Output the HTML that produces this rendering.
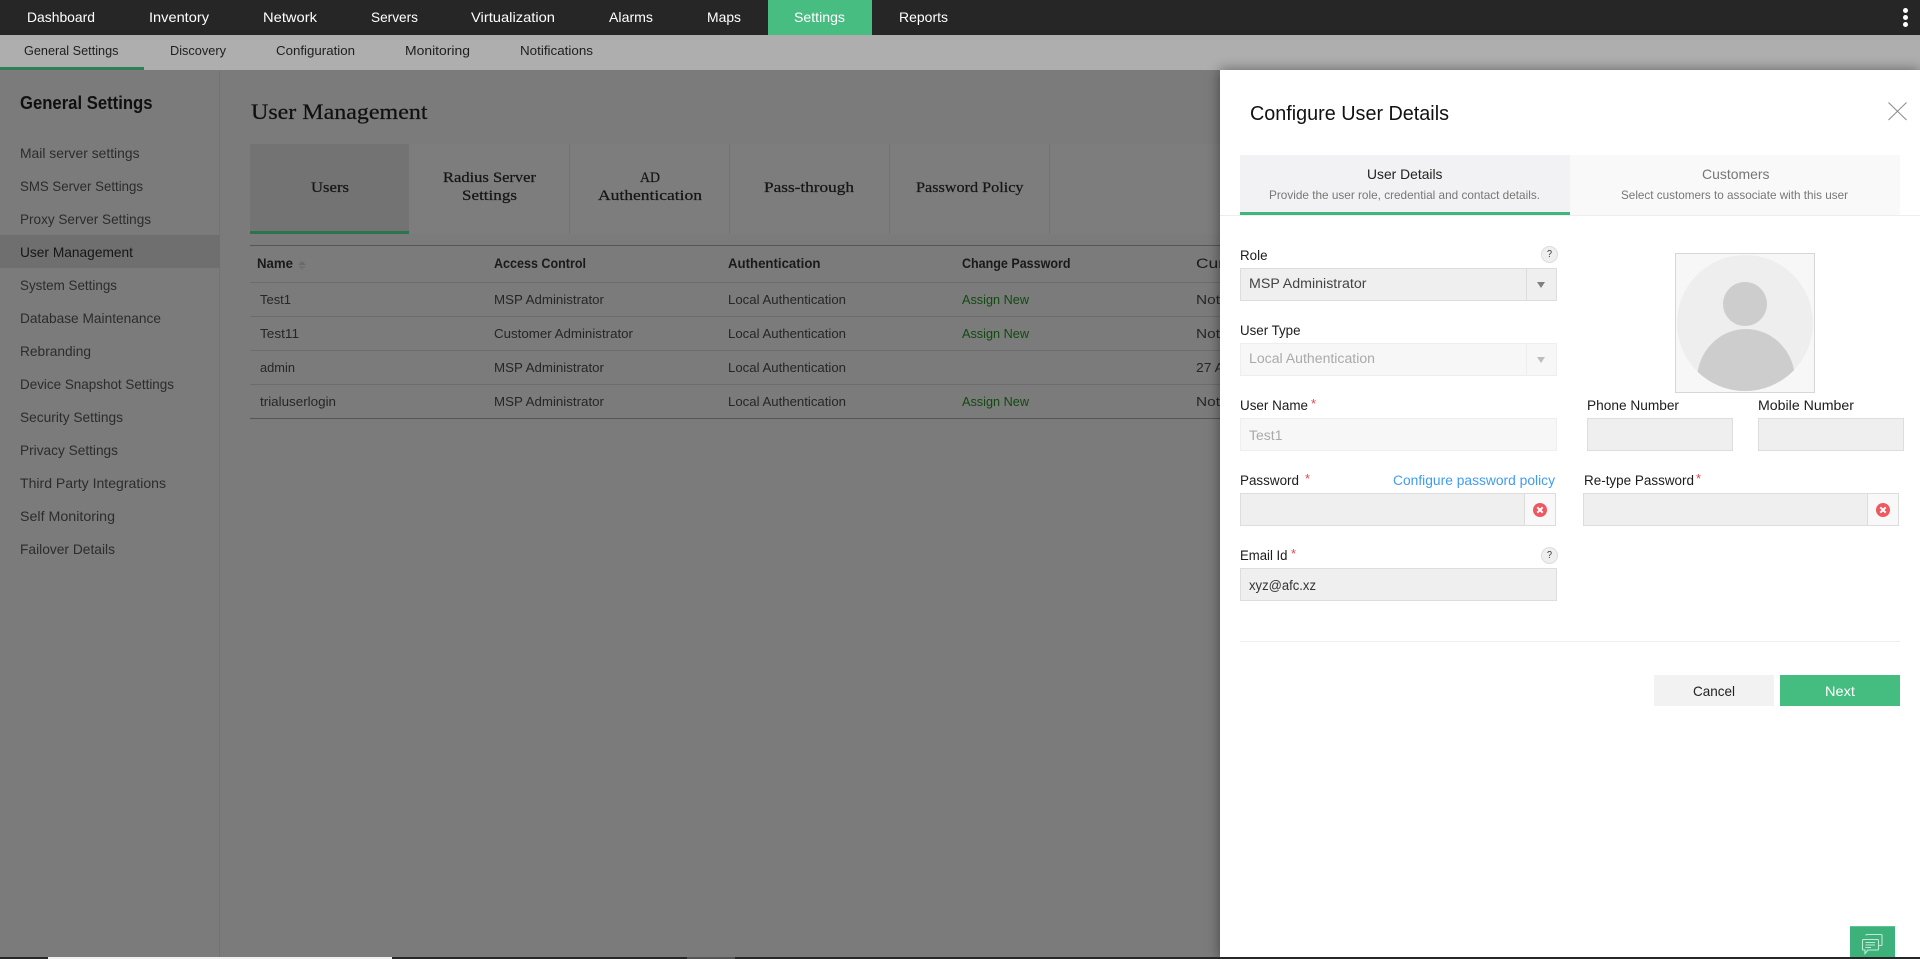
<!DOCTYPE html>
<html lang="en"><head><meta charset="utf-8"><title>Configure User Details</title>
<style>
html,body{margin:0;padding:0;width:1920px;height:959px;overflow:hidden;background:#7b7b7b}
body{position:relative;font-family:"Liberation Sans",sans-serif;font-size:14px;color:#333}
.a{position:absolute;box-sizing:border-box}
.t{position:absolute;white-space:nowrap;line-height:20px;height:20px;transform-origin:0 50%}
.s{font-family:"Liberation Serif",serif;color:#161616;-webkit-text-stroke:.25px #161616}
.tb{margin-top:1px}
.n{color:#fff;font-size:14px}
.u{color:#1e1e1e;font-size:13px;margin-top:1px;margin-left:-.5px}
.m{color:#2c2c2c;font-size:14px;margin-left:-.7px}
.h{color:#1a1a1a;font-size:14px;font-weight:bold;margin-left:-.7px}
.c{color:#262626;font-size:13px;margin-top:.7px}
.g{color:#104a10;font-size:13px;margin-top:.7px}
.l{color:#1c1c1c;font-size:13.5px;margin-top:1px;margin-left:-.5px}
.v{margin-top:1px}
.r{color:#f0404f;font-size:13px;margin-top:1px}
.i{background:#efefef;border:1px solid #ddd}
.d{background:#f7f7f7;border:1px solid #eee}
.tri{position:absolute;width:0;height:0;border-left:4.5px solid transparent;border-right:4.5px solid transparent}
</style></head><body>

<div class="a" style="left:0;top:0;width:1920px;height:35px;background:#262626"></div>
<div class="a" style="left:768px;top:0;width:104px;height:35px;background:#48bd82"></div>
<span class="t n" style="left:27px;top:7px;--w:68">Dashboard</span>
<span class="t n" style="left:149px;top:7px;--w:60">Inventory</span>
<span class="t n" style="left:262.5px;top:7px;--w:54">Network</span>
<span class="t n" style="left:371px;top:7px;--w:47">Servers</span>
<span class="t n" style="left:471px;top:7px;--w:84">Virtualization</span>
<span class="t n" style="left:609px;top:7px;--w:44">Alarms</span>
<span class="t n" style="left:707px;top:7px;--w:34">Maps</span>
<span class="t n" style="left:794px;top:7px;--w:51">Settings</span>
<span class="t n" style="left:898.5px;top:7px;--w:49">Reports</span>
<div class="a" style="left:1902.5px;top:8px;width:5px;height:5px;border-radius:50%;background:#fff"></div>
<div class="a" style="left:1902.5px;top:15px;width:5px;height:5px;border-radius:50%;background:#fff"></div>
<div class="a" style="left:1902.5px;top:22px;width:5px;height:5px;border-radius:50%;background:#fff"></div>

<div class="a" style="left:0;top:35px;width:1920px;height:35px;background:#aeaeae"></div>
<div class="a" style="left:0;top:67px;width:144px;height:3px;background:#2f7f58"></div>
<span class="t u" style="left:24.5px;top:40px;--w:94.5">General Settings</span>
<span class="t u" style="left:170px;top:40px;--w:56">Discovery</span>
<span class="t u" style="left:276px;top:40px;--w:79">Configuration</span>
<span class="t u" style="left:405px;top:40px;--w:65">Monitoring</span>
<span class="t u" style="left:520px;top:40px;--w:73">Notifications</span>

<div class="a" style="left:219px;top:70px;width:1px;height:887px;background:#737373"></div>
<span class="t" style="left:20px;top:93px;--w:132.5;font-size:18px;color:#101010;font-weight:bold">General Settings</span>
<div class="a" style="left:0;top:235px;width:220px;height:33px;background:#6f6f70"></div>
<span class="t m" style="left:20.5px;top:143px;--w:119.5">Mail server settings</span>
<span class="t m" style="left:20.5px;top:176px;--w:123">SMS Server Settings</span>
<span class="t m" style="left:20.5px;top:209px;--w:131">Proxy Server Settings</span>
<span class="t m" style="left:20.5px;top:242px;--w:113;color:#161616">User Management</span>
<span class="t m" style="left:20.5px;top:275px;--w:97">System Settings</span>
<span class="t m" style="left:20.5px;top:308px;--w:141">Database Maintenance</span>
<span class="t m" style="left:20.5px;top:341px;--w:71">Rebranding</span>
<span class="t m" style="left:20.5px;top:374px;--w:154">Device Snapshot Settings</span>
<span class="t m" style="left:20.5px;top:407px;--w:103">Security Settings</span>
<span class="t m" style="left:20.5px;top:440px;--w:98">Privacy Settings</span>
<span class="t m" style="left:20.5px;top:473px;--w:146">Third Party Integrations</span>
<span class="t m" style="left:20.5px;top:506px;--w:95">Self Monitoring</span>
<span class="t m" style="left:20.5px;top:539px;--w:95">Failover Details</span>

<span class="t s" style="left:250.5px;top:102px;--w:176.5;font-size:22px;color:#101010">User Management</span>

<div class="a" style="left:250px;top:144px;width:970px;height:90px;background:#7d7d7d"></div>
<div class="a" style="left:250px;top:144px;width:159px;height:90px;background:#737373"></div>
<div class="a" style="left:250px;top:231px;width:159px;height:3px;background:#2d7350"></div>
<div class="a" style="left:569px;top:144px;width:1px;height:90px;background:#727272"></div>
<div class="a" style="left:729px;top:144px;width:1px;height:90px;background:#727272"></div>
<div class="a" style="left:889px;top:144px;width:1px;height:90px;background:#727272"></div>
<div class="a" style="left:1049px;top:144px;width:1px;height:90px;background:#727272"></div>
<span class="t s tb" style="left:310.5px;top:177px;--w:38;font-size:15px">Users</span>
<span class="t s" style="left:443px;top:168px;--w:93;font-size:15px">Radius Server</span>
<span class="t s" style="left:462px;top:186px;--w:55;font-size:15px">Settings</span>
<span class="t s" style="left:640px;top:168px;--w:20;font-size:15px">AD</span>
<span class="t s" style="left:598px;top:186px;--w:104;font-size:15px">Authentication</span>
<span class="t s tb" style="left:764px;top:177px;--w:90;font-size:15px">Pass-through</span>
<span class="t s tb" style="left:915.5px;top:177px;--w:107.5;font-size:15px">Password Policy</span>

<div class="a" style="left:250px;top:245px;width:970px;height:1px;background:#555"></div>
<div class="a" style="left:250px;top:282px;width:970px;height:1px;background:#6c6c6c"></div>
<div class="a" style="left:250px;top:316px;width:970px;height:1px;background:#6c6c6c"></div>
<div class="a" style="left:250px;top:350px;width:970px;height:1px;background:#6c6c6c"></div>
<div class="a" style="left:250px;top:384px;width:970px;height:1px;background:#6c6c6c"></div>
<div class="a" style="left:250px;top:418px;width:970px;height:1px;background:#555"></div>

<span class="t h" style="left:257.5px;top:253px;--w:36">Name</span>
<div class="tri" style="left:297.5px;top:261px;border-bottom:4px solid #6a6a6a"></div>
<div class="tri" style="left:297.5px;top:266px;border-top:4px solid #717171"></div>
<span class="t h" style="left:494.5px;top:253px;--w:92">Access Control</span>
<span class="t h" style="left:728.5px;top:253px;--w:92.5">Authentication</span>
<span class="t h" style="left:962.5px;top:253px;--w:108.5">Change Password</span>
<span class="t h" style="left:1196.5px;top:253px;--w:28;font-weight:normal">Cur</span>

<span class="t c" style="left:260px;top:289px;--w:31">Test1</span>
<span class="t c" style="left:494px;top:289px;--w:110">MSP Administrator</span>
<span class="t c" style="left:728px;top:289px;--w:118">Local Authentication</span>
<span class="t g" style="left:962px;top:289px;--w:67">Assign New</span>
<span class="t c" style="left:1196px;top:289px;--w:24">Not</span>

<span class="t c" style="left:260px;top:323px;--w:39">Test11</span>
<span class="t c" style="left:494px;top:323px;--w:139">Customer Administrator</span>
<span class="t c" style="left:728px;top:323px;--w:118">Local Authentication</span>
<span class="t g" style="left:962px;top:323px;--w:67">Assign New</span>
<span class="t c" style="left:1196px;top:323px;--w:24">Not</span>

<span class="t c" style="left:260px;top:357px;--w:35">admin</span>
<span class="t c" style="left:494px;top:357px;--w:110">MSP Administrator</span>
<span class="t c" style="left:728px;top:357px;--w:118">Local Authentication</span>
<span class="t c" style="left:1196px;top:357px;--w:28">27 A</span>

<span class="t c" style="left:260px;top:391px;--w:76">trialuserlogin</span>
<span class="t c" style="left:494px;top:391px;--w:110">MSP Administrator</span>
<span class="t c" style="left:728px;top:391px;--w:118">Local Authentication</span>
<span class="t g" style="left:962px;top:391px;--w:67">Assign New</span>
<span class="t c" style="left:1196px;top:391px;--w:24">Not</span>

<!-- Panel -->
<div class="a" style="left:1220px;top:70px;width:700px;height:889px;background:#fff;box-shadow:0 0 12px rgba(0,0,0,.45)"></div>
<span class="t" style="left:1250px;top:104px;--w:199;font-size:20px;color:#111">Configure User Details</span>
<svg class="a" style="left:1886px;top:100px" width="24" height="23" viewBox="0 0 24 23"><path d="M2.5 2.5L20.5 20M20.5 2.5L2.5 20" stroke="#888" stroke-width="1" fill="none"/></svg>

<div class="a" style="left:1220px;top:215px;width:700px;height:1px;background:#eee"></div>
<div class="a" style="left:1240px;top:155px;width:330px;height:60px;background:#f2f2f4"></div>
<div class="a" style="left:1570px;top:155px;width:330px;height:60px;background:#f9f9fa"></div>
<div class="a" style="left:1240px;top:212px;width:330px;height:3px;background:#3fb67b"></div>
<span class="t" style="left:1367px;top:164px;--w:75.5;font-size:14px;color:#222">User Details</span>
<span class="t" style="left:1269px;top:185px;--w:271;font-size:12px;color:#777">Provide the user role, credential and contact details.</span>
<span class="t" style="left:1701.5px;top:164px;--w:67.5;font-size:14px;color:#777">Customers</span>
<span class="t" style="left:1621px;top:185px;--w:227;font-size:12px;color:#777">Select customers to associate with this user</span>

<span class="t l" style="left:1240.5px;top:245px;--w:27.5">Role</span>
<div class="a" style="left:1541px;top:246px;width:17px;height:17px;border-radius:50%;background:#efefef;border:1px solid #ddd"></div>
<span class="t" style="left:1546.5px;top:244.5px;--w:5;font-size:10px;color:#333">?</span>
<div class="a i" style="left:1240px;top:268px;width:317px;height:33px"></div>
<div class="a" style="left:1526px;top:268px;width:1px;height:33px;background:#ddd"></div>
<div class="tri" style="left:1536.5px;top:282px;border-top:6px solid #808080"></div>
<span class="t v" style="left:1249px;top:273px;--w:117.5;font-size:13.5px;color:#444">MSP Administrator</span>

<span class="t l" style="left:1240.5px;top:320px;--w:60.5">User Type</span>
<div class="a d" style="left:1240px;top:343px;width:317px;height:33px"></div>
<div class="a" style="left:1526px;top:343px;width:1px;height:33px;background:#eee"></div>
<div class="tri" style="left:1536.5px;top:357px;border-top:6px solid #bdbdbd"></div>
<span class="t v" style="left:1249px;top:348px;--w:126;font-size:13.5px;color:#aaa">Local Authentication</span>

<span class="t l" style="left:1240.5px;top:395px;--w:68">User Name</span>
<span class="t r" style="left:1310.5px;top:393px;--w:5">*</span>
<div class="a d" style="left:1240px;top:418px;width:317px;height:33px"></div>
<span class="t v" style="left:1249px;top:425px;--w:33.5;font-size:13.5px;color:#aaa">Test1</span>

<div class="a" style="left:1675px;top:253px;width:140px;height:140px;background:#f7f7f7;border:1px solid #d6d6d6"></div>
<svg class="a" style="left:1675px;top:253px" width="140" height="140" viewBox="0 0 140 140"><defs><clipPath id="cp"><circle cx="70" cy="70" r="68"/></clipPath></defs><circle cx="70" cy="70" r="68" fill="#eee"/><circle cx="70" cy="51" r="22" fill="#cdcdcd"/><ellipse cx="71" cy="127" rx="49" ry="51" fill="#cdcdcd" clip-path="url(#cp)"/></svg>

<span class="t l" style="left:1587px;top:395px;--w:92">Phone Number</span>
<div class="a i" style="left:1587px;top:418px;width:146px;height:33px"></div>
<span class="t l" style="left:1758px;top:395px;--w:96">Mobile Number</span>
<div class="a i" style="left:1758px;top:418px;width:146px;height:33px"></div>

<span class="t l" style="left:1240.5px;top:470px;--w:59">Password</span>
<span class="t r" style="left:1304.5px;top:468px;--w:5">*</span>
<span class="t v" style="left:1393px;top:470px;--w:162;font-size:13.5px;color:#3f9cf2">Configure password policy</span>
<div class="a i" style="left:1240px;top:493px;width:316px;height:33px"></div>
<div class="a" style="left:1524px;top:494px;width:31px;height:31px;background:#f8f8f8;border-left:1px solid #ddd"></div>
<svg class="a" style="left:1532px;top:502px" width="16" height="16" viewBox="0 0 16 16"><circle cx="8" cy="8" r="7" fill="#f0575f"/><path d="M5.3 5.3L10.7 10.7M10.7 5.3L5.3 10.7" stroke="#fff" stroke-width="2"/></svg>

<span class="t l" style="left:1584px;top:470px;--w:110">Re-type Password</span>
<span class="t r" style="left:1695.5px;top:468px;--w:5">*</span>
<div class="a i" style="left:1583px;top:493px;width:316px;height:33px"></div>
<div class="a" style="left:1867px;top:494px;width:31px;height:31px;background:#f8f8f8;border-left:1px solid #ddd"></div>
<svg class="a" style="left:1875px;top:502px" width="16" height="16" viewBox="0 0 16 16"><circle cx="8" cy="8" r="7" fill="#f0575f"/><path d="M5.3 5.3L10.7 10.7M10.7 5.3L5.3 10.7" stroke="#fff" stroke-width="2"/></svg>

<span class="t l" style="left:1240.5px;top:545px;--w:47.5">Email Id</span>
<span class="t r" style="left:1291px;top:543px;--w:5">*</span>
<div class="a" style="left:1541px;top:547px;width:17px;height:17px;border-radius:50%;background:#efefef;border:1px solid #ddd"></div>
<span class="t" style="left:1546.5px;top:545.5px;--w:5;font-size:10px;color:#333">?</span>
<div class="a i" style="left:1240px;top:568px;width:317px;height:33px"></div>
<span class="t v" style="left:1249px;top:575px;--w:67;font-size:13.5px;color:#333">xyz@afc.xz</span>

<div class="a" style="left:1240px;top:641px;width:660px;height:1px;background:#eee"></div>
<div class="a" style="left:1654px;top:675px;width:120px;height:31px;background:#f2f2f2"></div>
<span class="t" style="left:1693px;top:681px;--w:42;font-size:14px;color:#222">Cancel</span>
<div class="a" style="left:1780px;top:675px;width:120px;height:31px;background:#45bc80"></div>
<span class="t" style="left:1825px;top:681px;--w:30;font-size:14px;color:#fff">Next</span>

<div class="a" style="left:1850px;top:926px;width:45px;height:31px;background:#3cb27a;border-top:1px solid #62c496"></div>
<svg class="a" style="left:1860px;top:932px" width="25" height="25" viewBox="0 0 25 25" fill="none" stroke="#c4e8d6" stroke-width="1.1"><path d="M6 3.5a1 1 0 0 1 1-1H21a1 1 0 0 1 1 1V12.5a1 1 0 0 1-1 1H19"/><path d="M2.5 8.5a1 1 0 0 1 1-1H17.5a1 1 0 0 1 1 1V17a1 1 0 0 1-1 1H8L5 21.5V18H3.5a1 1 0 0 1-1-1Z" fill="#3cb27a"/><path d="M5.5 10.5H15M5.5 13H15M5.5 15.5H11"/></svg>

<div class="a" style="left:0;top:957px;width:1920px;height:2px;background:#262626"></div>
<div class="a" style="left:48px;top:957px;width:344px;height:2px;background:#f0f0f0"></div>
<div class="a" style="left:687px;top:957px;width:48px;height:2px;background:#555"></div>

<script>
(function(){var e=document.querySelectorAll('.t');for(var i=0;i<e.length;i++){var w=parseFloat(e[i].style.getPropertyValue('--w'));var a=e[i].getBoundingClientRect().width;if(w&&a)e[i].style.transform='scaleX('+(w/a)+')';}})();
</script>
</body></html>
